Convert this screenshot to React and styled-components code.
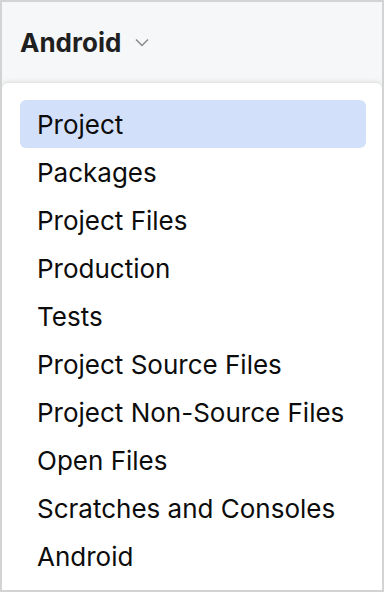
import React from "react";
import styled, { createGlobalStyle } from "styled-components";

const Global = createGlobalStyle`
  html, body { margin: 0; padding: 0; background: #ffffff; }
  body { font-family: Inter, "Noto Sans", sans-serif; }
`;

const Frame = styled.div`
  box-sizing: border-box;
  width: 384px;
  height: 592px;
  border: 2px solid #d3d3d3;
  background: #f6f7f9;
  display: flex;
  flex-direction: column;
  overflow: hidden;
`;

const Header = styled.div`
  height: 81px;
  flex: none;
  display: flex;
  align-items: center;
  padding-left: 18px;
  gap: 14px;
`;

const Title = styled.span`
  font-family: Inter, sans-serif;
  font-weight: 700;
  font-size: 26px;
  color: #1f1f1f;
`;

const Popup = styled.div`
  flex: 1;
  background: #ffffff;
  border-radius: 6px 6px 0 0;
  box-shadow: 0 -1px 5px rgba(0, 0, 0, 0.12);
  padding: 17px 16px 0 18px;
  display: flex;
  flex-direction: column;
`;

const Item = styled.div`
  height: 48px;
  display: flex;
  align-items: center;
  padding-left: 17px;
  border-radius: 6px;
  font-size: 26px;
  color: #0c0c0c;
  background: ${(p) => (p.$selected ? "#d3e0fa" : "transparent")};
`;

const items = [
  "Project",
  "Packages",
  "Project Files",
  "Production",
  "Tests",
  "Project Source Files",
  "Project Non-Source Files",
  "Open Files",
  "Scratches and Consoles",
  "Android",
];

export default function App() {
  return (
    <>
      <Global />
      <Frame>
        <Header>
          <Title>Android</Title>
          <svg width="14" height="9" viewBox="0 0 14 9">
            <path d="M1 1.5 L7 7.5 L13 1.5" fill="none" stroke="#8a8a8a" strokeWidth="1.5" />
          </svg>
        </Header>
        <Popup>
          {items.map((t, i) => (
            <Item key={t} $selected={i === 0}>
              {t}
            </Item>
          ))}
        </Popup>
      </Frame>
    </>
  );
}
